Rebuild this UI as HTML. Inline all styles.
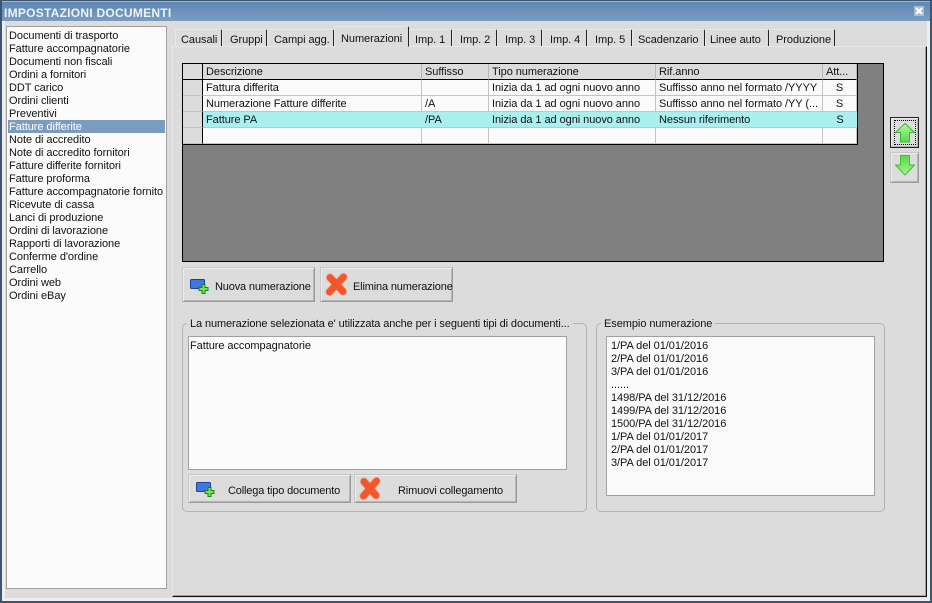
<!DOCTYPE html>
<html><head><meta charset="utf-8"><style>
html,body{margin:0;padding:0;width:932px;height:603px;overflow:hidden;background:#dcdcdc}
*{box-sizing:border-box}
body{font:11px/13px "Liberation Sans",sans-serif;color:#111;position:relative;letter-spacing:-.06px}
.a,.t,.c,.btn,.tab,.gb,.tl{position:absolute}
.t,.tl{white-space:nowrap}
.b{letter-spacing:-.16px}
.tl{top:33px;line-height:14px;z-index:3}
.tab{top:29px;height:17px;background:#dcdcdc;border-top:1px solid #e8e8e8;border-left:1px solid #e8e8e8;border-right:1px solid #222;border-radius:2px 2px 0 0}
.btn{background:#dcdcdc;border:1px solid;border-color:#c8c8c8 #9c9c9c #9c9c9c #c8c8c8;box-shadow:inset 1px 1px 0 #ececec,inset -1px -1px 0 #b4b4b4;white-space:nowrap}
.c{height:16px;line-height:17px;padding-left:3px;border-right:1px solid #c4c4c4;border-bottom:1px solid #c4c4c4;background:#fbfbfb;white-space:nowrap;overflow:hidden}
.h{background:#dcdcdc;border-bottom:1px solid #000;border-right:1px solid #b8b8b8}
.gb{border:1px solid #b4b4b4;border-radius:5px}
.list div{height:13px;line-height:14px;padding-left:1px;white-space:nowrap;overflow:hidden}
.tx{position:absolute;background:#fbfbfb;border:1px solid #a0a0a0}
</style></head><body>
<div class="a" style="left:0;top:0;width:932px;height:603px;border:1px solid #3c5570;border-width:1px 2px 2px 2px"></div>
<div class="a" style="left:2px;top:1px;width:928px;height:20px;background:linear-gradient(#6187b1,#7a9cc0);border-top:1px solid #9db4cc"></div>
<div class="a" style="left:0;top:0;width:932px;height:1px;background:#3c5570"></div>
<div class="t" style="left:4px;top:6px;color:#eef2f6;font:bold 12px/15px 'Liberation Sans',sans-serif;letter-spacing:.26px">IMPOSTAZIONI DOCUMENTI</div>
<div class="a" style="left:914px;top:6px;width:10px;height:10px;background:#a6bad1"></div>
<svg class="a" style="left:914px;top:6px" width="10" height="10"><path d="M2 2L8 8M8 2L2 8" stroke="#fff" stroke-width="2.2"/></svg>
<div class="a" style="left:2px;top:598px;width:928px;height:3px;background:#eee"></div>
<div class="a" style="left:2px;top:21px;width:3px;height:578px;background:#eee"></div>
<div class="a" style="left:927px;top:21px;width:3px;height:578px;background:#eee"></div>

<div class="tx list" style="left:6px;top:26px;width:161px;height:563px;padding:2px 1px 0 1px">
<div>Documenti di trasporto</div><div>Fatture accompagnatorie</div><div>Documenti non fiscali</div><div>Ordini a fornitori</div><div>DDT carico</div><div>Ordini clienti</div><div>Preventivi</div><div style="background:#7c9cbf;color:#fff">Fatture differite</div><div>Note di accredito</div><div>Note di accredito fornitori</div><div>Fatture differite fornitori</div><div>Fatture proforma</div><div>Fatture accompagnatorie fornito</div><div>Ricevute di cassa</div><div>Lanci di produzione</div><div>Ordini di lavorazione</div><div>Rapporti di lavorazione</div><div>Conferme d'ordine</div><div>Carrello</div><div>Ordini web</div><div>Ordini eBay</div>
</div>

<div class="a" style="left:172px;top:46px;width:755px;height:551px;border-left:1px solid #e8e8e8;border-top:1px solid #e8e8e8;border-right:1px solid #111;border-bottom:1px solid #111;box-shadow:inset -1px -1px 0 #a0a0a0"></div>
<div class="tab" style="left:175px;width:47px"></div><div class="tl" style="left:181px">Causali</div>
<div class="tab" style="left:222px;width:45px"></div><div class="tl" style="left:230px">Gruppi</div>
<div class="tab" style="left:267px;width:67px"></div><div class="tl" style="left:274px">Campi agg.</div>
<div class="tab" style="left:334px;top:26px;height:21px;width:75px;z-index:2;border-bottom:1px solid #dcdcdc"></div><div class="tl" style="left:341px;top:32px">Numerazioni</div>
<div class="tab" style="left:409px;width:43px"></div><div class="tl" style="left:415px">Imp. 1</div>
<div class="tab" style="left:452px;width:45px"></div><div class="tl" style="left:460px">Imp. 2</div>
<div class="tab" style="left:497px;width:45px"></div><div class="tl" style="left:505px">Imp. 3</div>
<div class="tab" style="left:542px;width:45px"></div><div class="tl" style="left:550px">Imp. 4</div>
<div class="tab" style="left:587px;width:45px"></div><div class="tl" style="left:595px">Imp. 5</div>
<div class="tab" style="left:632px;width:73px"></div><div class="tl" style="left:638px">Scadenzario</div>
<div class="tab" style="left:705px;width:64px"></div><div class="tl" style="left:710px">Linee auto</div>
<div class="tab" style="left:769px;width:66px"></div><div class="tl" style="left:776px">Produzione</div>

<div class="a" style="left:182px;top:63px;width:702px;height:199px;background:#808080;border:1px solid #000"></div>
<div class="a" style="left:182px;top:63px;width:676px;height:82px;border:1px solid #000;border-width:1px 2px 2px 1px;background:#fbfbfb"></div>
<div id="g" class="a" style="left:183px;top:64px;width:673px;height:80px">
<div class="c h" style="left:0;top:0;width:20px;border-right-color:#000"></div>
<div class="c h" style="left:20px;top:0;width:219px">Descrizione</div>
<div class="c h" style="left:239px;top:0;width:67px">Suffisso</div>
<div class="c h" style="left:306px;top:0;width:167px">Tipo numerazione</div>
<div class="c h" style="left:473px;top:0;width:167px">Rif.anno</div>
<div class="c h" style="left:640px;top:0;width:34px">Att...</div>

<div class="c" style="left:0;top:16px;width:20px;background:#dcdcdc;border-right-color:#000"></div>
<div class="c" style="left:20px;top:16px;width:219px">Fattura differita</div>
<div class="c" style="left:239px;top:16px;width:67px"></div>
<div class="c" style="left:306px;top:16px;width:167px">Inizia da 1 ad ogni nuovo anno</div>
<div class="c" style="left:473px;top:16px;width:167px">Suffisso anno nel formato /YYYY</div>
<div class="c" style="left:640px;top:16px;width:34px;text-align:center;padding:0">S</div>

<div class="c" style="left:0;top:32px;width:20px;background:#dcdcdc;border-right-color:#000"></div>
<div class="c" style="left:20px;top:32px;width:219px">Numerazione Fatture differite</div>
<div class="c" style="left:239px;top:32px;width:67px">/A</div>
<div class="c" style="left:306px;top:32px;width:167px">Inizia da 1 ad ogni nuovo anno</div>
<div class="c" style="left:473px;top:32px;width:167px">Suffisso anno nel formato /YY (...</div>
<div class="c" style="left:640px;top:32px;width:34px;text-align:center;padding:0">S</div>

<div class="c" style="left:0;top:48px;width:20px;background:#dcdcdc;border-right-color:#000"></div>
<div class="c" style="left:20px;top:48px;width:219px;background:#a9eff0;border-right:0">Fatture PA</div>
<div class="c" style="left:239px;top:48px;width:67px;background:#a9eff0;border-right:0">/PA</div>
<div class="c" style="left:306px;top:48px;width:167px;background:#a9eff0;border-right:0">Inizia da 1 ad ogni nuovo anno</div>
<div class="c" style="left:473px;top:48px;width:167px;background:#a9eff0;border-right:0">Nessun riferimento</div>
<div class="c" style="left:640px;top:48px;width:34px;text-align:center;padding:0;background:#a9eff0;border-right:0">S</div>

<div class="c" style="left:0;top:64px;width:20px;background:#dcdcdc;border-right-color:#000"></div>
<div class="c" style="left:20px;top:64px;width:219px"></div>
<div class="c" style="left:239px;top:64px;width:67px"></div>
<div class="c" style="left:306px;top:64px;width:167px"></div>
<div class="c" style="left:473px;top:64px;width:167px"></div>
<div class="c" style="left:640px;top:64px;width:34px"></div>
</div>

<svg width="0" height="0" style="position:absolute"><defs>
<linearGradient id="gu" x1="0" y1="0" x2="0" y2="1"><stop offset="0" stop-color="#b5f7a0"/><stop offset="1" stop-color="#52dc45"/></linearGradient>
<linearGradient id="gd" x1="0" y1="0" x2="0" y2="1"><stop offset="0" stop-color="#52dc45"/><stop offset="1" stop-color="#a5f590"/></linearGradient>
</defs></svg>
<div class="btn" style="left:890px;top:117px;width:29px;height:31px;border:1px solid #222"></div>
<div class="a" style="left:894px;top:120px;width:22px;height:25px;border:1px dotted #000"></div>
<svg class="a" style="left:895px;top:123px" width="20" height="20"><path d="M10 .5L19.5 9.5H14.5V19H5.5V9.5H.5Z" fill="url(#gu)" stroke="#3cb53a"/></svg>
<div class="btn" style="left:890px;top:152px;width:29px;height:31px"></div>
<svg class="a" style="left:895px;top:155px" width="20" height="21"><path d="M5.5 .5H14.5V10H19.5L10 20L.5 10H5.5Z" fill="url(#gd)" stroke="#46bb3f"/></svg>

<div class="btn" style="left:182px;top:267px;width:133px;height:35px"></div>
<svg class="a" style="left:189px;top:278px" width="21" height="18"><rect x="1.5" y="1.5" width="14" height="9" rx="1" fill="#3f77e0" stroke="#1d3f9a"/><path d="M12 8.5h3v-3h3v3h3v3h-3v3h-3v-3h-3z" transform="translate(-2 1)" fill="#7ee05a" stroke="#0b8a10"/></svg>
<div class="t b" style="left:215px;top:280px;line-height:14px">Nuova numerazione</div>
<div class="btn" style="left:320px;top:267px;width:133px;height:35px"></div>
<svg class="a" style="left:324px;top:272px" width="25" height="25"><g fill="none" stroke-linecap="round"><path d="M6 5.5L19 19.5M19.5 5L5.5 20" stroke="#e89a80" stroke-width="8"/><path d="M6 5.5L19 19.5M19.5 5L5.5 20" stroke="#f4552a" stroke-width="6.5"/></g></svg>
<div class="t b" style="left:353px;top:280px;line-height:14px">Elimina numerazione</div>

<div class="gb" style="left:182px;top:323px;width:405px;height:189px"></div>
<div class="t b" style="left:187px;top:317px;background:#dcdcdc;padding:0 3px;line-height:14px;letter-spacing:-.11px">La numerazione selezionata e' utilizzata anche per i seguenti tipi di documenti...</div>
<div class="tx" style="left:188px;top:336px;width:379px;height:134px;padding:2px 1px;line-height:14px"><span>Fatture accompagnatorie</span></div>
<div class="btn" style="left:188px;top:474px;width:163px;height:29px"></div>
<svg class="a" style="left:195px;top:481px" width="21" height="18"><rect x="1.5" y="1.5" width="14" height="9" rx="1" fill="#3f77e0" stroke="#1d3f9a"/><path d="M12 8.5h3v-3h3v3h3v3h-3v3h-3v-3h-3z" transform="translate(-2 1)" fill="#7ee05a" stroke="#0b8a10"/></svg>
<div class="t b" style="left:228px;top:484px;line-height:14px">Collega tipo documento</div>
<div class="btn" style="left:354px;top:474px;width:163px;height:29px"></div>
<svg class="a" style="left:358px;top:476px" width="24" height="25"><g fill="none" stroke-linecap="round"><path d="M6 5.5L18 19.5M18.5 5L5.5 20" stroke="#e89a80" stroke-width="8"/><path d="M6 5.5L18 19.5M18.5 5L5.5 20" stroke="#f4552a" stroke-width="6.5"/></g></svg>
<div class="t b" style="left:398px;top:484px;line-height:14px">Rimuovi collegamento</div>

<div class="gb" style="left:596px;top:323px;width:289px;height:189px"></div>
<div class="t" style="left:601px;top:317px;background:#dcdcdc;padding:0 3px;line-height:14px">Esempio numerazione</div>
<div class="tx" style="left:606px;top:336px;width:269px;height:160px;padding:3px 4px 0 4px">1/PA del 01/01/2016<br>2/PA del 01/01/2016<br>3/PA del 01/01/2016<br>......<br>1498/PA del 31/12/2016<br>1499/PA del 31/12/2016<br>1500/PA del 31/12/2016<br>1/PA del 01/01/2017<br>2/PA del 01/01/2017<br>3/PA del 01/01/2017</div>
</body></html>
